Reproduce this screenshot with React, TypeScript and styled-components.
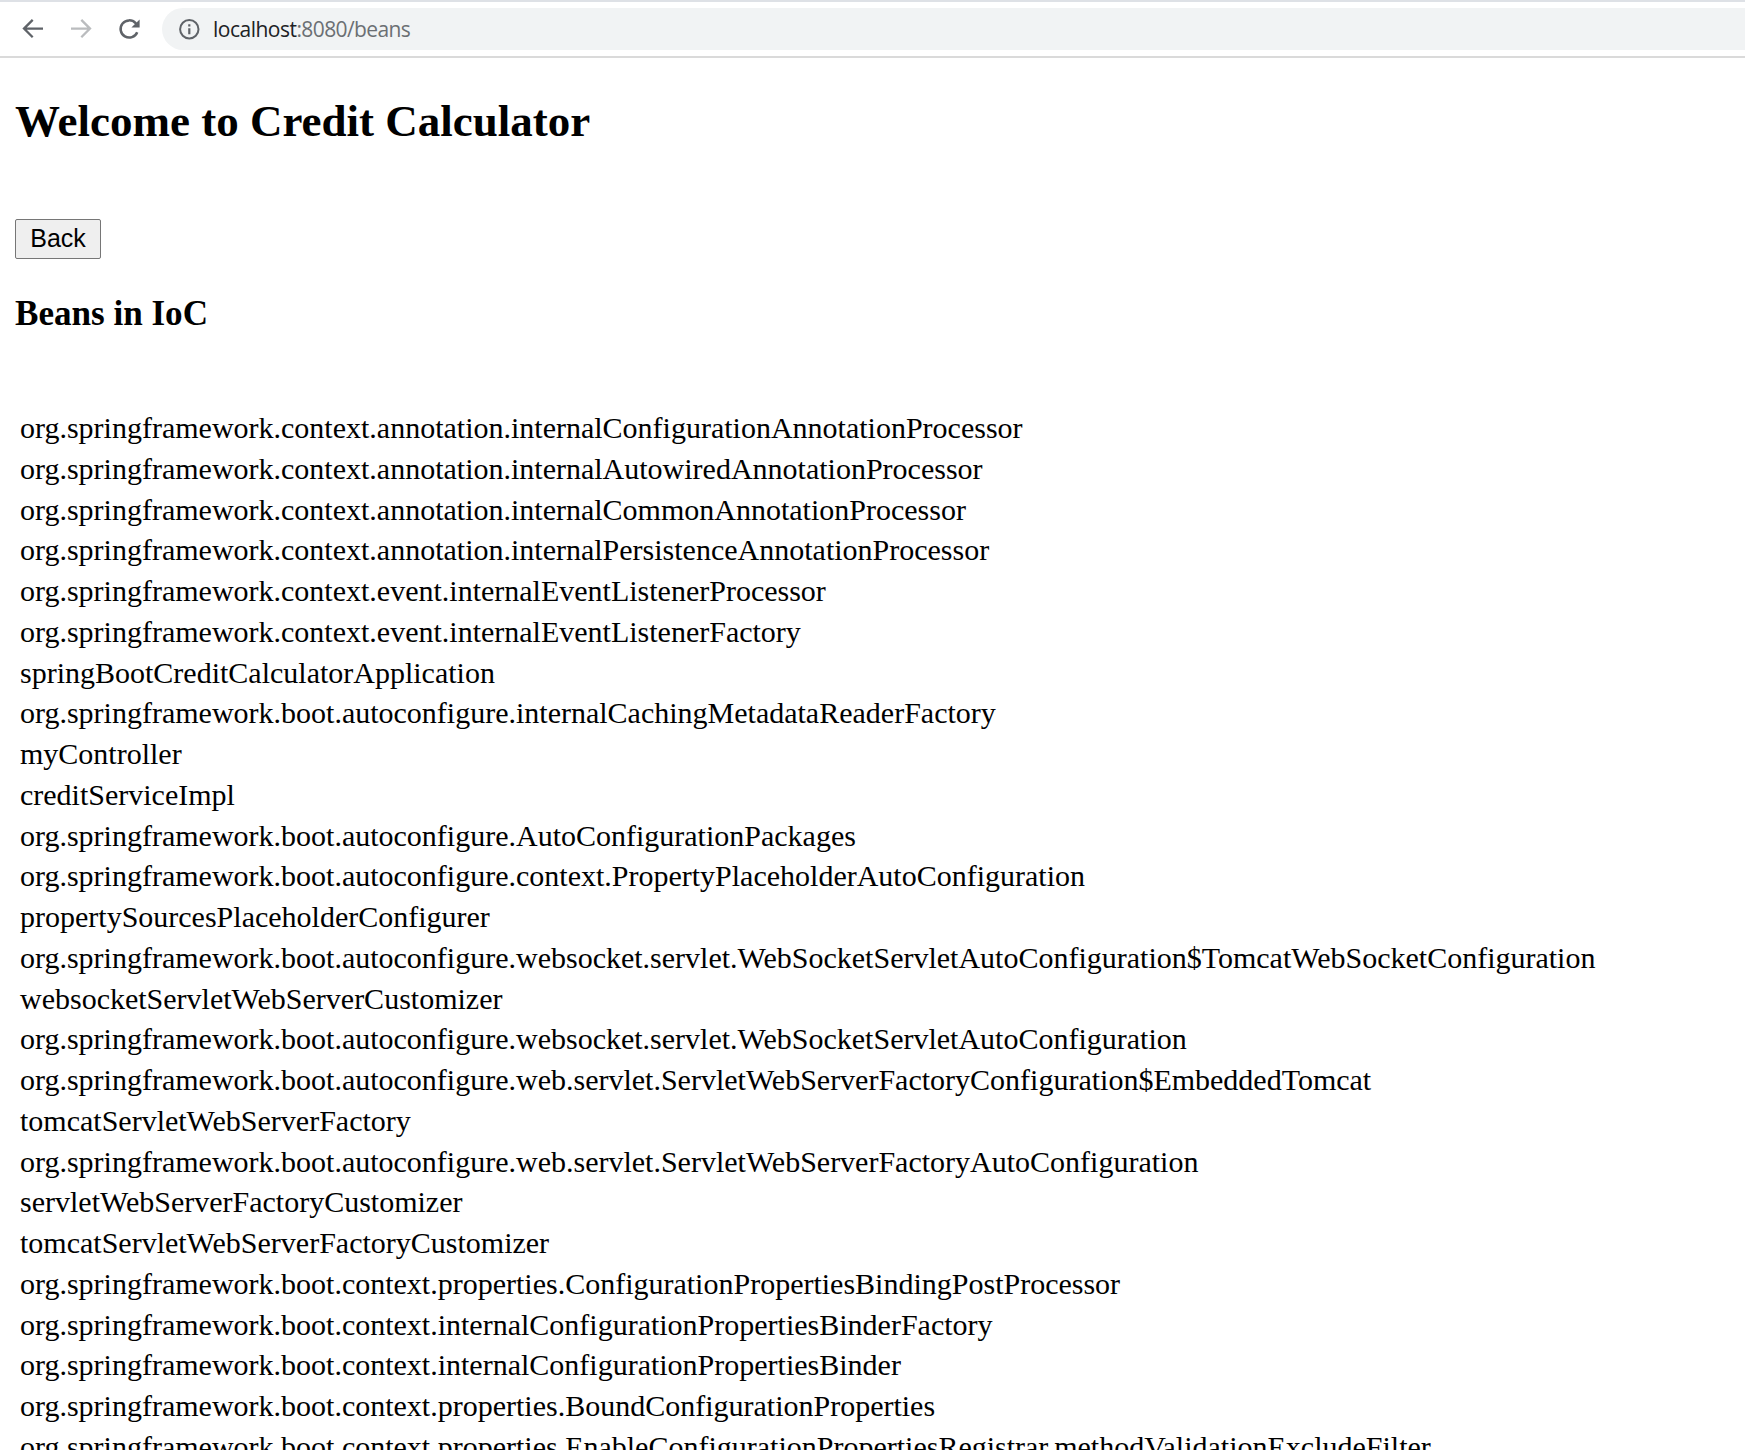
import React from "react";
import styled, { createGlobalStyle } from "styled-components";

const GlobalStyle = createGlobalStyle`
  html, body { margin: 0; padding: 0; background: #fff; }
  * { box-sizing: border-box; }
`;

const Window = styled.div`
  height: 1450px;
  overflow: hidden;
  display: flex;
  flex-direction: column;
  background: #fff;
  color: #000;
  font-family: "Liberation Serif", "Times New Roman", serif;
`;

const Toolbar = styled.header`
  flex: none;
  height: 58px;
  display: flex;
  align-items: center;
  padding-left: 20px;
  border-top: 2px solid #dee1e6;
  border-bottom: 2px solid #dadada;
`;

const NavButton = styled.span<{ $dim?: boolean }>`
  flex: none;
  width: 26px;
  height: 26px;
  margin-right: 22px;
  color: ${(p) => (p.$dim ? "#babcbe" : "#5f6368")};
  svg { display: block; }
`;

const AddressBar = styled.div`
  flex: 1;
  height: 42px;
  margin-left: -2px;
  padding-left: 15px;
  display: flex;
  align-items: center;
  background: #f1f3f4;
  border-radius: 21px 0 0 21px;
  color: #5f6368;
`;

const Address = styled.span`
  margin-left: 12px;
  font: 21px/30px "Open Sans", "Noto Sans", sans-serif;
  letter-spacing: -0.62px;
  color: #6b6f73;
  white-space: nowrap;
`;

const Host = styled.span`
  color: #202124;
  letter-spacing: -0.5px;
`;

const Page = styled.main`
  padding: 37px 15px 0;
`;

const Title = styled.h2`
  margin: 0 0 72px;
  font-size: 45px;
  line-height: 52px;
  font-weight: 700;
`;

const BackButton = styled.button`
  display: block;
  width: 86px;
  height: 40px;
  padding: 0 0 2px;
  border: 1px solid #767676;
  border-radius: 2px;
  background: #efefef;
  color: #000;
  font: 25px/36px "Liberation Sans", Arial, sans-serif;
`;

const Subtitle = styled.h3`
  margin: 35px 0 74px;
  font-size: 35.1px;
  line-height: 40px;
  font-weight: 700;
`;

const BeanTable = styled.ul`
  margin: 0;
  padding: 0 0 0 5px;
  list-style: none;
`;

const BeanRow = styled.li`
  height: 40.76px;
  font-size: 30px;
  line-height: 40.76px;
  white-space: nowrap;
`;

const spring = "org.springframework.";
const beans = [
  spring + "context.annotation.internalConfigurationAnnotationProcessor",
  spring + "context.annotation.internalAutowiredAnnotationProcessor",
  spring + "context.annotation.internalCommonAnnotationProcessor",
  spring + "context.annotation.internalPersistenceAnnotationProcessor",
  spring + "context.event.internalEventListenerProcessor",
  spring + "context.event.internalEventListenerFactory",
  "springBootCreditCalculatorApplication",
  spring + "boot.autoconfigure.internalCachingMetadataReaderFactory",
  "myController",
  "creditServiceImpl",
  spring + "boot.autoconfigure.AutoConfigurationPackages",
  spring + "boot.autoconfigure.context.PropertyPlaceholderAutoConfiguration",
  "propertySourcesPlaceholderConfigurer",
  spring + "boot.autoconfigure.websocket.servlet.WebSocketServletAutoConfiguration$TomcatWebSocketConfiguration",
  "websocketServletWebServerCustomizer",
  spring + "boot.autoconfigure.websocket.servlet.WebSocketServletAutoConfiguration",
  spring + "boot.autoconfigure.web.servlet.ServletWebServerFactoryConfiguration$EmbeddedTomcat",
  "tomcatServletWebServerFactory",
  spring + "boot.autoconfigure.web.servlet.ServletWebServerFactoryAutoConfiguration",
  "servletWebServerFactoryCustomizer",
  "tomcatServletWebServerFactoryCustomizer",
  spring + "boot.context.properties.ConfigurationPropertiesBindingPostProcessor",
  spring + "boot.context.internalConfigurationPropertiesBinderFactory",
  spring + "boot.context.internalConfigurationPropertiesBinder",
  spring + "boot.context.properties.BoundConfigurationProperties",
  spring + "boot.context.properties.EnableConfigurationPropertiesRegistrar.methodValidationExcludeFilter",
];

const Arrow = ({ flip }: { flip?: boolean }) => (
  <svg width="26" height="26" viewBox="0 0 26 26" fill="none" stroke="currentColor" strokeWidth="2.3">
    <path d={flip ? "M3 12.6H21.5M13.3 3.9L22 12.6L13.3 21.3" : "M23 12.6H4.5M12.7 3.9L4 12.6L12.7 21.3"} />
  </svg>
);

const Reload = () => (
  <svg width="26" height="26" viewBox="0 0 26 26">
    <path d="M21.2 16.2A8.6 8.6 0 1 1 19.6 7.2L20.8 8.4" fill="none" stroke="currentColor" strokeWidth="2.5" />
    <path d="M23.6 3.4V11.6H15.4Z" fill="currentColor" />
  </svg>
);

const Info = () => (
  <svg width="24" height="24" viewBox="0 0 24 24">
    <circle cx="12.3" cy="12.3" r="9.2" fill="none" stroke="currentColor" strokeWidth="2" />
    <path d="M11.2 7.3h2.2v2.2h-2.2zM11.2 11.3h2.2v6h-2.2z" fill="currentColor" />
  </svg>
);

export default function App() {
  return (
    <Window>
      <GlobalStyle />
      <Toolbar>
        <NavButton><Arrow /></NavButton>
        <NavButton $dim><Arrow flip /></NavButton>
        <NavButton><Reload /></NavButton>
        <AddressBar>
          <Info />
          <Address><Host>localhost</Host>:8080/beans</Address>
        </AddressBar>
      </Toolbar>
      <Page>
        <Title>Welcome to Credit Calculator</Title>
        <BackButton>Back</BackButton>
        <Subtitle>Beans in IoC</Subtitle>
        <BeanTable>
          {beans.map((bean) => (
            <BeanRow key={bean}>{bean}</BeanRow>
          ))}
        </BeanTable>
      </Page>
    </Window>
  );
}
